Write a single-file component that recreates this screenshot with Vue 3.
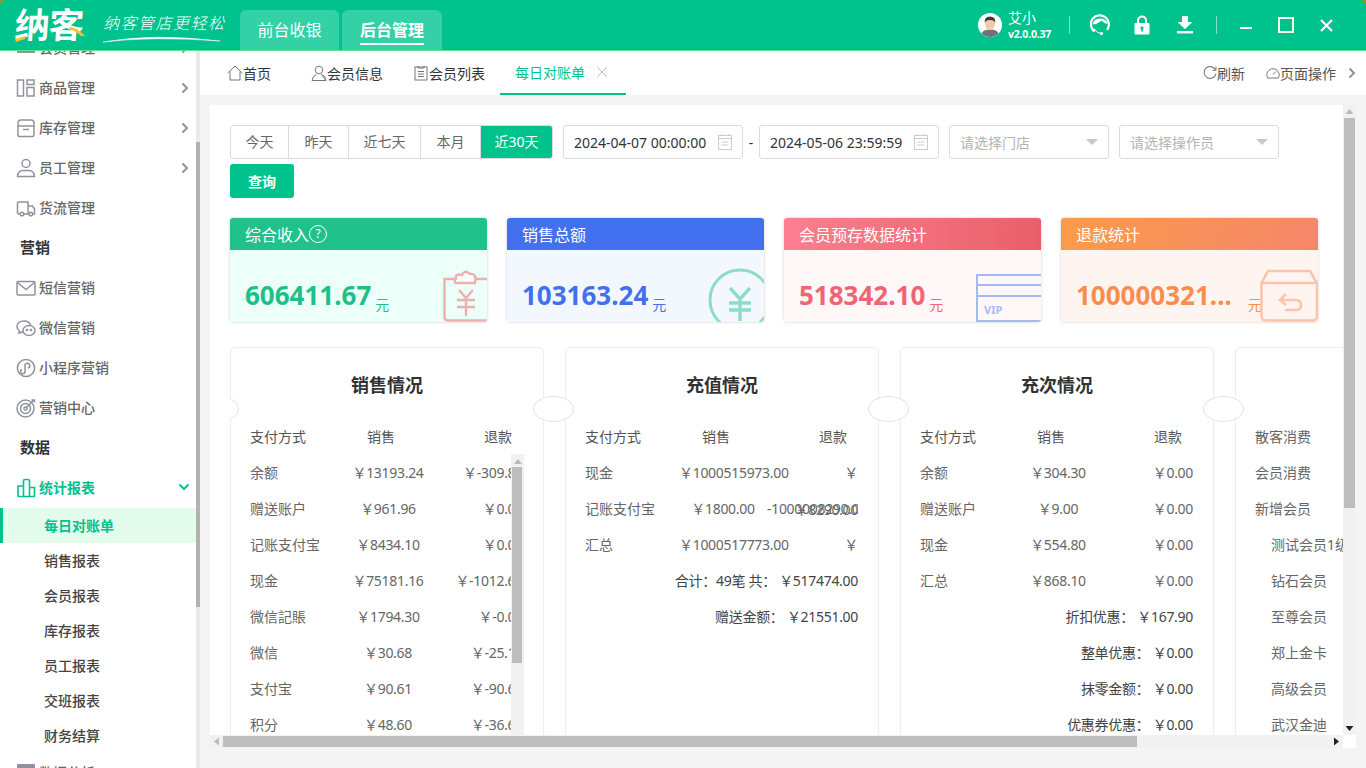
<script setup>
const navTop = [
  { type: 'item', label: '会员管理', icon: 'member', arrow: true },
  { type: 'item', label: '商品管理', icon: 'goods', arrow: true },
  { type: 'item', label: '库存管理', icon: 'stock', arrow: true },
  { type: 'item', label: '员工管理', icon: 'staff', arrow: true },
  { type: 'item', label: '货流管理', icon: 'truck' },
  { type: 'group', label: '营销' },
  { type: 'item', label: '短信营销', icon: 'mail' },
  { type: 'item', label: '微信营销', icon: 'wechat' },
  { type: 'item', label: '小程序营销', icon: 'mini' },
  { type: 'item', label: '营销中心', icon: 'target' },
  { type: 'group', label: '数据' }
]

const subNav = ['每日对账单', '销售报表', '会员报表', '库存报表', '员工报表', '交班报表', '财务结算']

const tabs = [
  { label: '首页', icon: 'home' },
  { label: '会员信息', icon: 'user' },
  { label: '会员列表', icon: 'list' }
]

const ranges = ['今天', '昨天', '近七天', '本月', '近30天']

const stats = [
  { key: 'green', title: '综合收入', value: '606411.67', help: true },
  { key: 'blue', title: '销售总额', value: '103163.24' },
  { key: 'red', title: '会员预存数据统计', value: '518342.10' },
  { key: 'orange', title: '退款统计', value: '100000321...' }
]

const salesRows = [
  ['余额', '￥13193.24', '￥-309.80'],
  ['赠送账户', '￥961.96', '￥0.00'],
  ['记账支付宝', '￥8434.10', '￥0.00'],
  ['现金', '￥75181.16', '￥-1012.60'],
  ['微信記賬', '￥1794.30', '￥-0.00'],
  ['微信', '￥30.68', '￥-25.10'],
  ['支付宝', '￥90.61', '￥-90.60'],
  ['积分', '￥48.60', '￥-36.60']
]

const rechargeRows = [
  ['现金', '￥1000515973.00', '￥'],
  ['记账支付宝', '￥1800.00', '-1000008290.00'],
  ['汇总', '￥1000517773.00', '￥']
]

const timesRows = [
  ['余额', '￥304.30', '￥0.00'],
  ['赠送账户', '￥9.00', '￥0.00'],
  ['现金', '￥554.80', '￥0.00'],
  ['汇总', '￥868.10', '￥0.00']
]

const timesTotals = [
  ['折扣优惠：', '￥167.90'],
  ['整单优惠：', '￥0.00'],
  ['抹零金额：', '￥0.00'],
  ['优惠券优惠：', '￥0.00']
]

const otherRows = ['散客消费', '会员消费', '新增会员']
const levels = ['测试会员1级', '钻石会员', '至尊会员', '郑上金卡', '高级会员', '武汉金迪']
</script>

<template>
  <div class="app">
    <header class="topbar">
      <div class="logo">
        <span class="logo-name">纳客</span>
        <svg class="logo-accent" width="72" height="34" viewBox="0 0 72 34">
          <path d="M0 29 L11 26 L10 29 L1 32 Z" fill="#f2c230" />
          <path d="M55 17 Q63 18 70 26 L66 26 Q61 21 54 19 Z" fill="#f2c230" />
        </svg>
        <div class="slogan">
          <span>纳客管店更轻松</span>
          <svg width="118" height="8" viewBox="0 0 118 8">
            <path d="M0 7 Q50 -2 117 6 Q50 1 0 7 Z" fill="#fff" stroke="#fff" stroke-width=".5" />
          </svg>
        </div>
      </div>
      <nav class="mode-tabs">
        <div class="mode-tab">前台收银</div>
        <div class="mode-tab active"><span>后台管理</span></div>
      </nav>
      <div class="top-right">
        <svg class="avatar" width="24" height="24" viewBox="0 0 24 24">
          <circle cx="12" cy="12" r="12" fill="#fff" />
          <path d="M3.5 20.5 Q5 16.5 12 16.5 Q19 16.5 20.5 20.5 A12 12 0 0 1 3.5 20.5 Z" fill="#6f7278" />
          <ellipse cx="12" cy="11" rx="5" ry="6" fill="#f5c8a8" />
          <path d="M6.8 10 Q6 3.5 12 3.5 Q18 3.5 17.2 10 Q16 6.8 12 7 Q8 6.8 6.8 10 Z" fill="#3b3b3b" />
        </svg>
        <div class="who">
          <div class="who-name">艾小</div>
          <div class="who-ver">v2.0.0.37</div>
        </div>
        <i class="top-sep first"></i>
        <svg class="t-headset" width="20" height="22" viewBox="0 0 20 22">
          <path d="M4.6 17.6 A9 9 0 1 1 17 15.8" fill="none" stroke="#fff" stroke-width="2.2" />
          <path d="M2.5 10.5 Q7 10.5 11.5 6.8 Q14 9.5 17.5 10 Q16.5 4.5 10 4.5 Q3.5 4.5 2.5 10.5 Z" fill="#fff" />
          <path d="M4 14.5 Q7 19.5 11 19.5" fill="none" stroke="#fff" stroke-width="1" />
          <circle cx="11.5" cy="19.6" r="1.6" fill="#fff" />
        </svg>
        <svg class="t-lock" width="16" height="20" viewBox="0 0 16 20">
          <path d="M4 9 V5.5 A4 4 0 0 1 12 5.5 V9" fill="none" stroke="#fff" stroke-width="2" />
          <path d="M1.5 8 H14.5 A1 1 0 0 1 15.5 9 V18.5 A1 1 0 0 1 14.5 19.5 H1.5 A1 1 0 0 1 .5 18.5 V9 A1 1 0 0 1 1.5 8 Z M8 11.5 A1.6 1.6 0 0 0 7.2 14.5 V16.5 H8.8 V14.5 A1.6 1.6 0 0 0 8 11.5 Z" fill="#fff" fill-rule="evenodd" />
        </svg>
        <svg class="t-down" width="16" height="18" viewBox="0 0 16 18">
          <path d="M5 0 H11 V6 H15.5 L8 13 L.5 6 H5 Z" fill="#fff" />
          <rect x="0" y="15" width="16" height="2.4" fill="#fff" />
        </svg>
        <i class="top-sep second"></i>
        <i class="t-min"></i>
        <i class="t-max"></i>
        <svg class="t-close" width="13" height="13" viewBox="0 0 13 13">
          <path d="M1 1 L12 12 M12 1 L1 12" stroke="#fff" stroke-width="2" />
        </svg>
      </div>
    </header>

    <div class="body">
      <aside class="sidebar">
        <div class="side-scroll">
          <template v-for="item in navTop" :key="item.label">
            <div v-if="item.type === 'group'" class="nav-group">{{ item.label }}</div>
            <div v-else class="nav-item">
              <svg class="nav-icon" width="20" height="20" viewBox="0 0 20 20" fill="none" stroke="#92929e" stroke-width="1.5">
                <template v-if="item.icon === 'member'">
                  <path d="M1 4 H19 M1 9 H19 M1 14 H19" stroke-width="2" />
                </template>
                <template v-if="item.icon === 'goods'">
                  <rect x="1.5" y="2" width="6" height="16" />
                  <rect x="11" y="2" width="7" height="4.5" />
                  <rect x="11" y="9.5" width="7" height="8.5" />
                </template>
                <template v-if="item.icon === 'stock'">
                  <path d="M2 8 V5 Q2 2 5 2 H15 Q18 2 18 5 V8 Z" />
                  <path d="M2 8 V17 Q2 18.5 3.5 18.5 H16.5 Q18 18.5 18 17 V8" />
                  <path d="M7 11.5 H13" />
                </template>
                <template v-if="item.icon === 'staff'">
                  <circle cx="10" cy="5.5" r="4" />
                  <path d="M1.5 18.5 Q2 12.5 7 12.5 H13 Q18 12.5 18.5 18.5 Z" />
                </template>
                <template v-if="item.icon === 'truck'">
                  <path d="M4 16 H2.5 Q1.5 16 1.5 15 V5 Q1.5 4 2.5 4 H12 V16 H8" />
                  <path d="M12 8 H16.5 L18.5 11 V16 H16.5 M12 16 H13" />
                  <circle cx="6" cy="16" r="1.8" />
                  <circle cx="14.8" cy="16" r="1.8" />
                </template>
                <template v-if="item.icon === 'mail'">
                  <rect x="1" y="3.5" width="18" height="13.5" rx="1" />
                  <path d="M1.5 4.5 L10 11.5 L18.5 4.5" />
                </template>
                <template v-if="item.icon === 'wechat'">
                  <path d="M8 3 C3.5 3 1 5.5 1 8.5 C1 10.5 2 12 3.5 13 L3 15 L6 14 Q7 14.2 8 14" />
                  <path d="M8 3 C11.5 3 14 5 14.8 7.5" />
                  <ellipse cx="13" cy="12.5" rx="6" ry="5" />
                  <circle cx="11" cy="12" r=".6" />
                  <circle cx="15" cy="12" r=".6" />
                </template>
                <template v-if="item.icon === 'mini'">
                  <circle cx="10" cy="10" r="8.6" />
                  <path d="M6 11.5 A2.2 2.2 0 1 0 9 13.5 V8 A2.4 2.4 0 1 1 12 10" />
                </template>
                <template v-if="item.icon === 'target'">
                  <circle cx="9.5" cy="10.5" r="8.5" />
                  <circle cx="9.5" cy="10.5" r="5" />
                  <circle cx="9.5" cy="10.5" r="1.6" />
                  <path d="M10 10 L18 2 M15.5 2 H18.5 V4.5" />
                </template>
              </svg>
              <span class="nav-label">{{ item.label }}</span>
              <svg v-if="item.arrow" class="nav-arrow" width="8" height="12" viewBox="0 0 8 12">
                <path d="M1.5 1.5 L6 6 L1.5 10.5" fill="none" stroke="#92929e" stroke-width="2" />
              </svg>
            </div>
          </template>
          <div class="nav-item open">
            <svg class="nav-icon" width="20" height="20" viewBox="0 0 20 20" fill="none" stroke="#00c28c" stroke-width="1.6">
              <path d="M1.5 18.5 H18 Q18.5 18.5 18.5 18 V9.5 H13.5 V18.5 M13.5 13 V3 Q13.5 1.5 12 1.5 H9 Q7.5 1.5 7.5 3 V18.5 M7.5 8 H2 V18 Q2 18.5 1.5 18.5" />
            </svg>
            <span class="nav-label">统计报表</span>
            <svg class="nav-arrow down" width="12" height="8" viewBox="0 0 12 8">
              <path d="M1.5 1.5 L6 6 L10.5 1.5" fill="none" stroke="#00c28c" stroke-width="2" />
            </svg>
          </div>
          <div v-for="(name, i) in subNav" :key="name" class="sub-item" :class="{ active: i === 0 }">{{ name }}</div>
          <div class="nav-item">
            <svg class="nav-icon" width="20" height="20" viewBox="0 0 20 20">
              <rect x="1" y="1" width="18" height="18" rx="1" fill="#92929e" />
            </svg>
            <span class="nav-label">数据分析</span>
          </div>
        </div>
        <div class="side-bar"><i></i></div>
      </aside>

      <main class="main">
        <div class="tabbar">
          <div v-for="tab in tabs" :key="tab.label" class="tab" :class="'tab-' + tab.icon">
            <svg width="16" height="16" viewBox="0 0 16 16" fill="none" stroke="#777" stroke-width="1">
              <path v-if="tab.icon === 'home'" d="M.8 8 L8 1 L15.2 8 M3 6.5 V15 H13 V6.5" />
              <template v-if="tab.icon === 'user'">
                <circle cx="8" cy="5" r="3.8" />
                <path d="M1 15.5 Q1.5 10.5 5.5 9.5 M10.5 9.5 Q14.5 10.5 15 15.5 Z M1 15.5 H15" />
              </template>
              <template v-if="tab.icon === 'list'">
                <rect x="2" y="2" width="12" height="13" />
                <path d="M5 1 V3 H11 V1 M5 6.5 H11 M5 9 H11 M5 11.5 H11" />
              </template>
            </svg>
            <span>{{ tab.label }}</span>
          </div>
          <div class="tab current">
            <span>每日对账单</span>
            <svg width="10" height="10" viewBox="0 0 10 10"><path d="M.5 .5 L9.5 9.5 M9.5 .5 L.5 9.5" stroke="#bbb" stroke-width="1" /></svg>
          </div>
          <div class="tab-tools">
            <div class="tool">
              <svg width="14" height="14" viewBox="0 0 13 13" fill="none" stroke="#777">
                <path d="M11.5 3.5 A5.5 5.5 0 1 0 12 7" />
                <path d="M12 .8 V4 H8.8" />
              </svg>
              <span>刷新</span>
            </div>
            <div class="tool">
              <svg width="14" height="13" viewBox="0 0 14 13" fill="none" stroke="#777">
                <path d="M1.6 11 A6.2 6.2 0 1 1 12.4 11 Z" />
                <path d="M7 7.5 L10 4.5" />
              </svg>
              <span>页面操作</span>
            </div>
            <svg class="tool-arrow" width="8" height="12" viewBox="0 0 8 12">
              <path d="M1.5 1.5 L6 6 L1.5 10.5" fill="none" stroke="#92929e" stroke-width="2" />
            </svg>
          </div>
        </div>

        <div class="panel">
          <div class="panel-view">
            <div class="content">
              <div class="filters">
                <div class="ranges">
                  <div v-for="(r, i) in ranges" :key="r" class="range" :class="{ on: i === 4 }">{{ r }}</div>
                </div>
                <div class="date-box">
                  <span>2024-04-07 00:00:00</span>
                  <svg width="14" height="16" viewBox="0 0 14 16" fill="none" stroke="#ccc"><rect x=".5" y="1.5" width="13" height="14" /><path d="M.5 4.5 H13.5 M3.5 8 H10.5 M3.5 11 H10.5 M3.5 0 V2 M10.5 0 V2" /></svg>
                </div>
                <span class="date-dash">-</span>
                <div class="date-box">
                  <span>2024-05-06 23:59:59</span>
                  <svg width="14" height="16" viewBox="0 0 14 16" fill="none" stroke="#ccc"><rect x=".5" y="1.5" width="13" height="14" /><path d="M.5 4.5 H13.5 M3.5 8 H10.5 M3.5 11 H10.5 M3.5 0 V2 M10.5 0 V2" /></svg>
                </div>
                <div class="select-box"><span>请选择门店</span><i></i></div>
                <div class="select-box"><span>请选择操作员</span><i></i></div>
                <button class="query">查询</button>
              </div>

              <div class="stats">
                <div v-for="s in stats" :key="s.key" class="stat" :class="s.key">
                  <div class="stat-head">
                    {{ s.title }}<span v-if="s.help" class="help">?</span>
                  </div>
                  <div class="stat-body">
                    <span class="stat-value">{{ s.value }}</span>
                    <span class="stat-unit">元</span>
                    <svg v-if="s.key === 'green'" class="stat-art art-clip" width="44" height="52" viewBox="0 0 44 52" fill="none" stroke="#eeb0ae" stroke-width="2.4">
                      <path d="M44 9 H1.5 V47 Q1.5 50.5 5 50.5 H44" />
                      <path d="M13 9 Q12 3 19 5 Q22 -1 27 4 Q34 3 32 13 H13 Q10 12 13 9 Z" fill="#fdfdfc" />
                      <path d="M16 20 L23 28 L30 20 M14 30 H32 M14 37 H32 M23 28 V46" />
                    </svg>
                    <svg v-if="s.key === 'blue'" class="stat-art art-yen" width="56" height="54" viewBox="0 0 56 54" fill="none" stroke="#8edcc6" stroke-width="3">
                      <circle cx="32" cy="32" r="30" />
                      <path d="M22 20 L32 31 L42 20 M21 35 H43 M21 42 H43 M32 31 V53" stroke-width="3.4" />
                    </svg>
                    <svg v-if="s.key === 'red'" class="stat-art art-vip" width="65" height="48" viewBox="0 0 65 48" fill="none" stroke="#a7b9f3" stroke-width="2">
                      <path d="M65 1 H1 V47 H65 M1 11 H65 M1 22 H65" />
                      <text x="8" y="40" class="vip-text">VIP</text>
                    </svg>
                    <svg v-if="s.key === 'orange'" class="stat-art art-box" width="58" height="53" viewBox="0 0 58 53" fill="none" stroke="#fcc4ab" stroke-width="2.6">
                      <path d="M1.5 14 L8 2 H50 L57 14 V47 Q57 51.5 52 51.5 H6 Q1.5 51.5 1.5 47 Z M1.5 14 H57" />
                      <path d="M21 31 H36 Q41 31 41 36 Q41 41 36 41 H25 M26 25 L20 31 L26 36" />
                    </svg>
                  </div>
                </div>
              </div>

              <div class="cards">
                <section class="card">
                  <i class="notch"></i>
                  <h3>销售情况</h3>
                  <div class="row head"><span>支付方式</span><span>销售</span><span>退款</span></div>
                  <div class="rows-wrap">
                    <div v-for="r in salesRows" :key="r[0]" class="row">
                      <span>{{ r[0] }}</span><span>{{ r[1] }}</span><span>{{ r[2] }}</span>
                    </div>
                    <div class="mini-bar"><b></b><i></i></div>
                  </div>
                </section>

                <section class="card">
                  <i class="notch"></i>
                  <h3>充值情况</h3>
                  <div class="row head"><span>支付方式</span><span>销售</span><span>退款</span></div>
                  <div v-for="r in rechargeRows" :key="r[0]" class="row">
                    <span>{{ r[0] }}</span><span>{{ r[1] }}</span><span class="clip-end">{{ r[2] }}<em v-if="r[2].length > 2" class="over">￥8290.00</em></span>
                  </div>
                  <div class="total">合计：49笔 共： ￥517474.00</div>
                  <div class="total">赠送金额： ￥21551.00</div>
                </section>

                <section class="card">
                  <i class="notch"></i>
                  <h3>充次情况</h3>
                  <div class="row head"><span>支付方式</span><span>销售</span><span>退款</span></div>
                  <div v-for="r in timesRows" :key="r[0]" class="row">
                    <span>{{ r[0] }}</span><span>{{ r[1] }}</span><span>{{ r[2] }}</span>
                  </div>
                  <div v-for="t in timesTotals" :key="t[0]" class="total">{{ t[0] }} {{ t[1] }}</div>
                </section>

                <section class="card">
                  <i class="notch"></i>
                  <h3>&nbsp;</h3>
                  <div v-for="o in otherRows" :key="o" class="row single">{{ o }}</div>
                  <div v-for="l in levels" :key="l" class="row single indent">{{ l }}</div>
                </section>
              </div>
            </div>

            <div class="vbar">
              <svg width="13" height="13" viewBox="0 0 13 13"><path d="M6.5 4 L10.5 9 H2.5 Z" fill="#bbb" /></svg>
              <i class="vthumb"></i>
              <svg class="vdown" width="13" height="13" viewBox="0 0 13 13"><path d="M6.5 9 L10.5 4 H2.5 Z" fill="#222" /></svg>
            </div>
          </div>
          <div class="hbar">
            <svg width="13" height="13" viewBox="0 0 13 13"><path d="M4 6.5 L9 2.5 V10.5 Z" fill="#bbb" /></svg>
            <i class="hthumb"></i>
            <svg class="hright" width="13" height="13" viewBox="0 0 13 13"><path d="M9 6.5 L4 2.5 V10.5 Z" fill="#222" /></svg>
            <i class="corner"></i>
          </div>
        </div>
      </main>
    </div>
  </div>
</template>

<style scoped>
.app {
  width: 1366px;
  height: 768px;
  display: flex;
  flex-direction: column;
  overflow: hidden;
  font-family: "Noto Sans", "Noto Sans CJK SC", sans-serif;
  font-size: 14px;
  color: #666;
  background: #f4f4f4;
}

/* top bar */
.topbar {
  height: 51px;
  flex: none;
  display: flex;
  background:
    linear-gradient(135deg, #8a9a20 3px, transparent 3px),
    linear-gradient(225deg, #8a9a20 3px, transparent 3px),
    #00c28c;
  border-bottom: 1px solid #5fe08f;
  box-sizing: border-box;
  color: #fff;
}

.logo {
  width: 240px;
  flex: none;
  display: flex;
  padding-left: 15px;
  position: relative;
  box-sizing: border-box;
}

.logo-name {
  width: 86px;
  font-size: 35px;
  line-height: 50px;
  font-weight: 700;
  letter-spacing: -1px;
  transform: skewX(-4deg);
}

.logo-accent {
  position: absolute;
  left: 15px;
  top: 10px;
}

.slogan {
  display: flex;
  flex-direction: column;
  padding-top: 12px;
  margin-left: 2px;
}

.slogan span {
  font-size: 16px;
  line-height: 22px;
  font-weight: 300;
  font-style: italic;
  letter-spacing: 1.5px;
  white-space: nowrap;
}

.slogan svg {
  margin-top: 1px;
}

.mode-tabs {
  display: flex;
  align-items: flex-end;
  gap: 3px;
}

.mode-tab {
  width: 99px;
  height: 40px;
  border-radius: 6px 6px 0 0;
  background: #33d1a5;
  text-align: center;
  font-size: 16px;
  line-height: 40px;
}

.mode-tab.active {
  width: 100px;
  font-weight: 700;
}

.mode-tab.active span {
  display: inline-block;
  height: 33px;
  line-height: 40px;
  border-bottom: 2px solid #fff;
}

.top-right {
  margin-left: auto;
  display: flex;
  align-items: center;
  padding-right: 33px;
}

.who {
  margin-left: 6px;
  width: 61px;
}

.who-name {
  font-size: 14px;
  line-height: 18px;
}

.who-ver {
  font-size: 10.5px;
  line-height: 15px;
  font-weight: 700;
  letter-spacing: -.2px;
}

.top-sep {
  width: 1px;
  height: 18px;
  background: #7fe0c5;
}

.t-headset {
  margin-left: 20px;
}

.t-lock {
  margin-left: 24px;
}

.t-down {
  margin-left: 27px;
}

.top-sep.second {
  margin-left: 23px;
}

.t-min {
  width: 12px;
  height: 2px;
  margin: 6px 0 0 23px;
  background: #fff;
}

.t-max {
  width: 12px;
  height: 12px;
  margin-left: 26px;
  border: 2px solid #fff6e0;
}

.t-close {
  margin-left: 26px;
}

/* sidebar */
.body {
  flex: 1;
  min-height: 0;
  display: flex;
}

.sidebar {
  width: 200px;
  flex: none;
  display: flex;
  background: #fff;
  overflow: hidden;
}

.side-scroll {
  width: 196px;
  flex: none;
  margin-top: -23px;
}

.nav-item {
  height: 40px;
  display: flex;
  align-items: center;
  padding-left: 16px;
  color: #666;
  font-size: 14px;
  font-weight: 500;
}

.nav-icon {
  flex: none;
}

.nav-label {
  margin-left: 3px;
  margin-bottom: 2px;
}

.nav-arrow {
  margin-left: auto;
  margin-right: 7px;
}

.nav-arrow.down {
  margin-right: 6px;
  margin-top: -3px;
}

.nav-item.open {
  color: #00c28c;
  font-weight: 700;
}

.nav-group {
  height: 40px;
  line-height: 38px;
  padding-left: 20px;
  color: #333;
  font-size: 15px;
  font-weight: 700;
}

.sub-item {
  height: 35px;
  line-height: 35px;
  padding-left: 44px;
  color: #444;
  font-size: 14px;
  font-weight: 500;
}

.sub-item.active {
  background: #e3fcec;
  color: #00c28c;
  font-weight: 700;
  border-left: 3px solid #00c28c;
  padding-left: 41px;
}

.side-bar {
  width: 4px;
  background: #e9e9e9;
  padding-top: 91px;
  box-sizing: border-box;
}

.side-bar i {
  display: block;
  height: 465px;
  background: #b2b2b2;
}

/* main */
.main {
  flex: 1;
  min-width: 0;
  display: flex;
  flex-direction: column;
}

.tabbar {
  height: 44px;
  flex: none;
  display: flex;
  align-items: center;
  background: #fff;
  padding-left: 27px;
  color: #333;
  font-size: 14px;
}

.tab {
  display: flex;
  align-items: center;
  height: 44px;
  box-sizing: border-box;
}

.tab-user {
  margin-left: 40px;
}

.tab-list {
  margin-left: 30px;
}

.tab.current {
  margin-left: 15px;
  width: 126px;
  padding-left: 15px;
  color: #00c28c;
  border-bottom: 2px solid #00c28c;
}

.tab.current svg {
  margin-left: 12px;
}

.tab-tools {
  margin-left: auto;
  display: flex;
  align-items: center;
  padding-right: 10px;
  color: #555;
}

.tool {
  display: flex;
  align-items: center;
  margin-right: 21px;
}

.tool:nth-child(2) {
  margin-right: 12px;
}

.panel {
  flex: 1;
  min-height: 0;
  margin: 10px 10px 20px;
  display: flex;
  flex-direction: column;
  background: #fff;
}

.panel-view {
  flex: 1;
  min-height: 0;
  display: flex;
}

.content {
  flex: 1;
  min-width: 0;
  overflow: hidden;
  padding: 20px 0 0 20px;
}

.filters {
  display: flex;
  flex-wrap: wrap;
  align-items: center;
  gap: 5px 10px;
  width: 1060px;
}

.ranges {
  display: flex;
  height: 34px;
  box-sizing: border-box;
  border: 1px solid #dcdcdc;
  border-radius: 3px;
  overflow: hidden;
}

.range {
  width: 60px;
  border-right: 1px solid #dcdcdc;
  box-sizing: border-box;
  text-align: center;
  line-height: 32px;
  color: #666;
}

.range:nth-child(1) {
  width: 58px;
}

.range:nth-child(3) {
  width: 72px;
}

.range:nth-child(5) {
  width: 71px;
  border-right: 0;
}

.range.on {
  background: #00c28c;
  color: #fff;
}

.date-box {
  width: 180px;
  height: 34px;
  box-sizing: border-box;
  border: 1px solid #dcdcdc;
  border-radius: 3px;
  display: flex;
  align-items: center;
  justify-content: space-between;
  padding: 0 10px;
  color: #333;
  font-size: 14px;
}

.date-dash {
  width: 16px;
  margin: 0 -10px;
  color: #333;
  text-align: center;
}

.select-box {
  width: 160px;
  height: 34px;
  box-sizing: border-box;
  border: 1px solid #dcdcdc;
  border-radius: 3px;
  display: flex;
  align-items: center;
  justify-content: space-between;
  padding: 0 10px;
  color: #b4b4b4;
}

.select-box i {
  width: 0;
  height: 0;
  border-left: 6px solid transparent;
  border-right: 6px solid transparent;
  border-top: 6px solid #c8c8c8;
}

.query {
  width: 64px;
  height: 34px;
  border: 0;
  border-radius: 3px;
  background: #00c28c;
  color: #fff;
  font: 700 14px "Noto Sans", "Noto Sans CJK SC", sans-serif;
}

/* stat cards */
.stats {
  display: flex;
  gap: 20px;
  margin-top: 20px;
}

.stat {
  width: 257px;
  flex: none;
  height: 104px;
  border-radius: 3px;
  overflow: hidden;
  box-shadow: 0 0 3px rgba(0, 0, 0, .2);
}

.stat-head {
  height: 32px;
  display: flex;
  align-items: center;
  padding-left: 15px;
  color: #fff;
  font-size: 16px;
}

.help {
  width: 18px;
  height: 18px;
  box-sizing: border-box;
  border: 1px solid #fff;
  border-radius: 50%;
  text-align: center;
  font-size: 12px;
  line-height: 16px;
}

.stat-body {
  height: 72px;
  position: relative;
  display: flex;
  align-items: flex-start;
  padding: 24px 0 0 15px;
  box-sizing: border-box;
}

.stat-value {
  font-size: 26px;
  line-height: 42px;
  font-weight: 700;
  white-space: nowrap;
}

.stat-unit {
  margin: 21px 0 0 4px;
  font-size: 14px;
  line-height: 20px;
}

.orange .stat-unit {
  margin-left: 16px;
}

.stat-art {
  position: absolute;
  right: 0;
  bottom: 0;
}

.vip-text {
  font: 700 11px "Noto Sans", sans-serif;
  fill: #a7b9f3;
  stroke: none;
}

.green .stat-head { background: #21c18b; }
.green .stat-body { background: #edfff9; }
.green .stat-value, .green .stat-unit { color: #1fbf8a; }
.blue .stat-head { background: #4270ee; }
.blue .stat-body { background: #f3f8ff; }
.blue .stat-value, .blue .stat-unit { color: #4270ee; }
.red .stat-head { background: linear-gradient(100deg, #fb8090, #e95f69); }
.red .stat-body { background: #fff7f8; }
.red .stat-value, .red .stat-unit { color: #f16473; }
.orange .stat-head { background: linear-gradient(100deg, #fb9a4b, #f5876a); }
.orange .stat-body { background: #fff5f0; }
.orange .stat-value, .orange .stat-unit { color: #fb8c50; }

/* report cards */
.cards {
  display: flex;
  gap: 21px;
  margin-top: 25px;
  overflow: hidden;
  margin-bottom: -100px;
}

.card {
  width: 314px;
  flex: none;
  height: 520px;
  box-sizing: border-box;
  position: relative;
  padding: 0 19px;
  border: 1px solid #eee;
  border-radius: 6px;
  box-shadow: 0 0 2px rgba(0, 0, 0, .06);
  background: #fff;
  color: #666;
}

.notch {
  position: absolute;
  top: 48px;
  left: -33px;
  width: 41px;
  height: 26px;
  box-sizing: border-box;
  border: 1px solid #e4e4e4;
  border-radius: 50%;
  background: #fff;
}

.card h3 {
  margin: 0;
  padding-top: 24px;
  height: 70px;
  box-sizing: border-box;
  text-align: center;
  font-size: 18px;
  line-height: 27px;
  color: #333;
  font-weight: 700;
}

.row {
  height: 36px;
  display: grid;
  grid-template-columns: 94px 88px 91px;
  align-items: center;
  white-space: nowrap;
}

.row span:nth-child(2) {
  text-align: center;
  letter-spacing: -.3px;
}

.row span:nth-child(3) {
  text-align: right;
  letter-spacing: -.3px;
}

.row.head {
  color: #555;
}

.row.head span {
  letter-spacing: 0;
}

.row.head span:nth-child(2) {
  padding-right: 14px;
}

.row.head span:nth-child(3) {
  padding-right: 11px;
}

.row.single {
  display: block;
  line-height: 38px;
}

.row.indent {
  padding-left: 16px;
}

.clip-end {
  position: relative;
  display: block;
  overflow: hidden;
}

.over {
  position: absolute;
  right: 0;
  top: 0;
  font-style: normal;
}

.total {
  height: 36px;
  line-height: 38px;
  padding-right: 1px;
  text-align: right;
  color: #444;
  white-space: nowrap;
  letter-spacing: -.3px;
}

.rows-wrap {
  position: relative;
}

.mini-bar {
  position: absolute;
  right: 0;
  top: 0;
  width: 13px;
  height: 290px;
  background: #f1f1f1;
}

.mini-bar b {
  display: block;
  width: 0;
  height: 0;
  margin: 5px auto 3px;
  border-left: 4px solid transparent;
  border-right: 4px solid transparent;
  border-bottom: 5px solid #bbb;
}

.mini-bar i {
  display: block;
  width: 10px;
  height: 196px;
  margin-left: 1px;
  background: #bdbdbd;
}

/* panel scrollbars */
.vbar {
  width: 13px;
  flex: none;
  display: flex;
  flex-direction: column;
  background: #f1f1f1;
}

.vthumb {
  display: block;
  width: 11px;
  height: 390px;
  margin-left: 1px;
  background: #bdbdbd;
}

.vdown {
  margin-top: auto;
}

.hbar {
  height: 13px;
  flex: none;
  display: flex;
  background: #f1f1f1;
}

.hthumb {
  display: block;
  width: 914px;
  height: 11px;
  margin-top: 1px;
  background: #bdbdbd;
}

.hright {
  margin-left: auto;
}

.corner {
  width: 13px;
  background: #fff;
}
</style>

<style>
html, body {
  margin: 0;
  padding: 0;
  background: #f4f4f4;
}
</style>
